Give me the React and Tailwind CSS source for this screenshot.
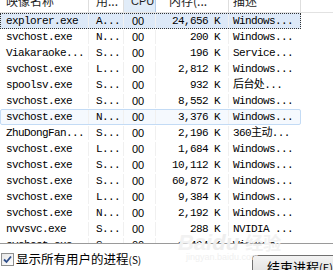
const rows = [
  ["explorer.exe", "A...", "24,656 K", "Windows..."],
  ["svchost.exe", "N...", "200 K", "Windows..."],
  ["Viakaraoke...", "S...", "196 K", "Service..."],
  ["svchost.exe", "L...", "2,812 K", "Windows..."],
  ["spoolsv.exe", "S...", "932 K", "后台处..."],
  ["svchost.exe", "S...", "8,552 K", "Windows..."],
  ["svchost.exe", "N...", "3,376 K", "Windows..."],
  ["ZhuDongFan...", "S...", "2,196 K", "360主动..."],
  ["svchost.exe", "L...", "1,684 K", "Windows..."],
  ["svchost.exe", "S...", "10,112 K", "Windows..."],
  ["svchost.exe", "S...", "60,872 K", "Windows..."],
  ["svchost.exe", "L...", "9,384 K", "Windows..."],
  ["svchost.exe", "N...", "2,192 K", "Windows..."],
  ["nvvsvc.exe", "S...", "288 K", "NVIDIA ..."],
  ["svchost.exe", "S...", "1,404 K", "Windows..."],
];

const mono = { fontFamily: '"Liberation Mono", "Noto Sans CJK SC", monospace' };

function Header() {
  return (
    <div className="flex h-[23px] -mt-[10px] shrink-0 items-center border-b border-[#e2e2e2] text-[12px] text-[#1e1e1e] font-['Noto_Sans_CJK_SC',sans-serif]">
      <div className="w-[89px] h-full pl-[6px] flex items-center border-r border-[#dedede]">映像名称</div>
      <div className="w-[35px] h-full pl-[7px] flex items-center border-r border-[#dedede]">用...</div>
      <div className="w-[32px] h-full pl-[7px] flex items-center border-r border-[#b4cde8] bg-[#e1ecf8] font-['Liberation_Sans',sans-serif] text-[11px]">CPU</div>
      <div className="w-[73px] h-full pl-[13px] flex items-center border-r border-[#dedede]">内存(...</div>
      <div className="w-[72px] h-full pl-[4px] flex items-center border-r border-[#dedede]">描述</div>
      <div className="flex-1 h-full" />
    </div>
  );
}

function Row({ row, index }) {
  const [name, user, mem, desc] = row;
  let box = "border border-transparent";
  if (index === 0) box = "border border-dotted border-[#333] bg-[#dde9f8]";
  if (index === 6) box = "border border-[#c3dbf5] rounded-[2px] bg-[#f5f9fe]";
  return (
    <div className="flex h-[16px] shrink-0">
      <div className={`flex w-[301px] h-full items-center text-[11px] tracking-[-0.6px] text-black ${box}`} style={mono}>
        <div className="w-[88px] pl-[5px] whitespace-nowrap overflow-hidden border-r border-[#f0f0f0] h-full flex items-center">{name}</div>
        <div className="w-[35px] pl-[7px] whitespace-nowrap border-r border-[#f0f0f0] h-full flex items-center">{user}</div>
        <div className="w-[32px] pl-[8px] h-full flex items-center border-r border-[#f0f0f0] font-['Liberation_Sans',sans-serif] tracking-normal">00</div>
        <div className="w-[73px] pr-[8px] h-full flex items-center justify-end whitespace-nowrap border-r border-[#f0f0f0]">{mem}</div>
        <div className="flex-1 pl-[4px] h-full flex items-center whitespace-nowrap overflow-hidden">{desc}</div>
      </div>
      <div className="flex-1" />
    </div>
  );
}

export default function App() {
  return (
    <div className="relative w-[333px] h-[270px] overflow-hidden bg-white">
      <div className="flex flex-col h-[244px] overflow-hidden border-b border-[#9a9a9a]">
        <Header />
        {rows.map((row, i) => (
          <Row key={i} row={row} index={i} />
        ))}
      </div>
      <div className="flex items-start justify-between h-[26px]">
        <div className="flex items-center gap-[2px] pl-[1px] mt-[9px] text-[12.5px] text-black font-['Noto_Sans_CJK_SC',sans-serif]">
          <div className="w-[13px] h-[13px] border border-[#8e8f8f] bg-gradient-to-br from-[#e6e6e6] to-white flex items-center justify-center">
            <svg width="9" height="9" viewBox="0 0 9 9">
              <path d="M1 4.5 L3.5 7 L8 1.5" fill="none" stroke="#2e4e8a" strokeWidth="1.8" />
            </svg>
          </div>
          <span className="leading-none">显示所有用户的进程<span className="text-[10px]">(S)</span></span>
        </div>
        <div className="mt-[11px] mr-[-12px] w-[93px] h-[24px] border border-[#707070] rounded-[3px] bg-gradient-to-b from-[#f3f3f3] to-[#dcdcdc] pl-[14px] flex items-center text-[13px] text-black font-['Noto_Sans_CJK_SC',sans-serif]">
          结束进程<span className="text-[11px]">(E)</span>
        </div>
      </div>
      <div className="absolute left-[178px] top-[226px] text-[22px] font-bold italic text-[#f2f2f2] font-['Liberation_Sans',sans-serif] pointer-events-none">
        Bai<span className="text-[#eeeeee]">du</span> <span className="font-['Noto_Sans_CJK_SC',sans-serif] not-italic text-[18px]">经验</span>
      </div>
      <div className="absolute left-[186px] top-[251px] text-[9px] text-[#f0f0f0] font-['Liberation_Sans',sans-serif] pointer-events-none">
        jingyan.baidu.com
      </div>
    </div>
  );
}
